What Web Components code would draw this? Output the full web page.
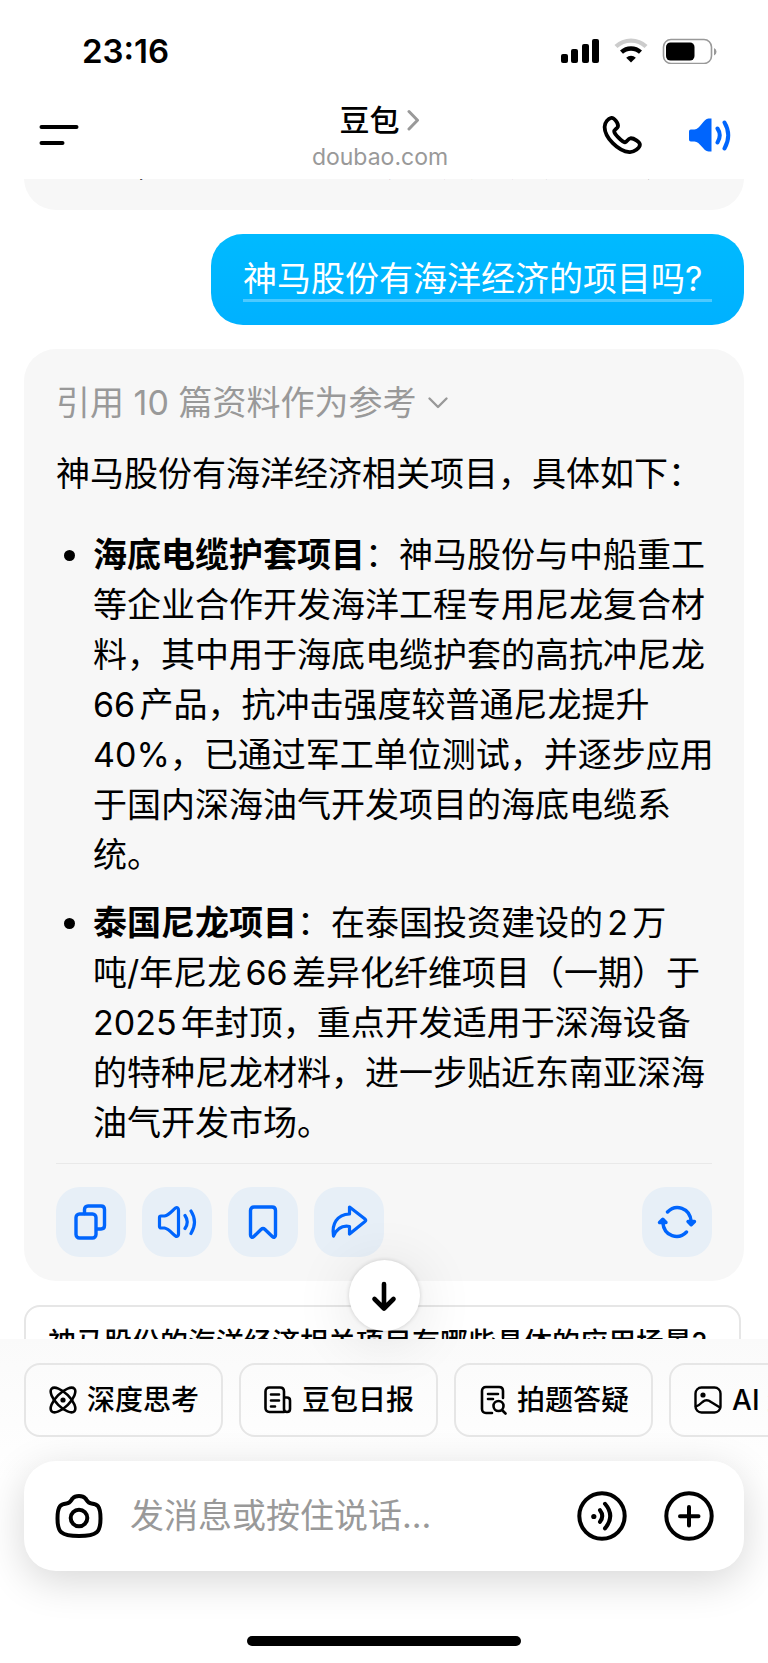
<!DOCTYPE html>
<html lang="zh-CN">
<head>
<meta charset="utf-8">
<meta name="viewport" content="width=device-width, initial-scale=1">
<title>豆包</title>
<style>
  html, body { margin: 0; height: 100%; }
  body {
    --blue: #0065fd; --card: #f7f7f7; --muted: #999; --line: #e6e6e6;
    background: #fff; color: #000;
    font: 400 34px/50px "Inter", "Noto Sans CJK SC", sans-serif;
  }
</style>
</head>
<body>
<chat-app>
  <status-bar slot="top" time="23:16"></status-bar>
  <chat-nav slot="top" name="豆包" site="doubao.com"></chat-nav>

  <answer-card previous>
    <p>66，在深海油气等领域具有应用前景广。</p>
  </answer-card>
  <user-bubble>神马股份有海洋经济的项目吗?&nbsp;</user-bubble>
  <answer-card>
    <button-link slot="source">引用 10 篇资料作为参考</button-link>
    <p>神马股份有海洋经济相关项目，具体如下：</p>
    <point-list>
      <point-item><b>海底电缆护套项目</b>：神马股份与中船重工等企业合作开发海洋工程专用尼龙复合材料，其中用于海底电缆护套的高抗冲尼龙66产品，抗冲击强度较普通尼龙提升40%，已通过军工单位测试，并逐步应用于国内深海油气开发项目的海底电缆系统。</point-item>
      <point-item><b>泰国尼龙项目</b>：在泰国投资建设的2万吨/&NoBreak;年尼龙66差异化纤维项目（一期）于2025年封顶，重点开发适用于深海设备的特种尼龙材料，进一步贴近东南亚深海油气开发市场。</point-item>
    </point-list>
    <answer-actions slot="actions"></answer-actions>
  </answer-card>
  <suggest-chip>神马股份的海洋经济相关项目有哪些具体的应用场景?</suggest-chip>

  <scroll-down slot="dock"></scroll-down>
  <tool-row slot="dock">
    <tool-chip icon="atom">深度思考</tool-chip>
    <tool-chip icon="news">豆包日报</tool-chip>
    <tool-chip icon="scan">拍题答疑</tool-chip>
    <tool-chip icon="image">AI 生图</tool-chip>
  </tool-row>
  <message-box slot="dock"></message-box>
  <home-bar slot="dock"></home-bar>
</chat-app>

<script>
const define = (name, html, setup) => {
  const tpl = document.createElement('template');
  tpl.innerHTML = html;
  customElements.define(name, class extends HTMLElement {
    constructor() {
      super();
      this.attachShadow({ mode: 'open' }).append(tpl.content.cloneNode(true));
    }
    connectedCallback() { if (setup) setup(this, this.shadowRoot); }
  });
};

const svg = (w, h, body, sw = 3) =>
  `<svg width="${w}" height="${h}" viewBox="0 0 ${w} ${h}" fill="none" stroke="currentColor" stroke-width="${sw}" stroke-linecap="round" stroke-linejoin="round" aria-hidden="true">${body}</svg>`;

const ICONS = {
  signal: svg(40, 26, '<g fill="currentColor" stroke="none"><rect x="1" y="16" width="7" height="9" rx="2"/><rect x="11" y="11" width="7" height="14" rx="2"/><rect x="22" y="6" width="7" height="19" rx="2"/><rect x="32" y="1" width="7" height="24" rx="2"/></g>'),
  wifi: svg(34, 26, '<g stroke-linecap="butt"><path d="M2 8.5a22 22 0 0 1 30 0" stroke="#ccc"/><path d="M7.500 14.200a14 14 0 0 1 19 0"/></g><path d="M17 24.500l-4.800-4.800a7 7 0 0 1 9.600 0z" fill="currentColor" stroke="none"/>', 4.4),
  battery: svg(56, 26, '<rect x="1.500" y="1.500" width="48" height="24" rx="7.500" stroke="#999" stroke-width="1.600"/><rect x="4" y="4.500" width="28.500" height="18" rx="4.500" fill="currentColor" stroke="none"/><path d="M52 10v7.500q2.500-1 2.500-3.750T52 10z" fill="#999" stroke="none"/>'),
  menu: svg(40, 24, '<path d="M2.500 4h35M2.500 20h21"/>', 4),
  chevron: svg(14, 22, '<path d="M3 2.500l8.500 8.700L3 20" stroke="#999"/>', 3),
  down: svg(22, 14, '<path d="M2.500 2.500l8.500 8.500 8.500-8.500"/>', 2.4),
  phone: svg(40, 40, '<path d="M9.300 2.900C12 2.300 16.800 8.800 15.900 11.600c-.6 2-3.900 3.200-3.700 4.800.3 2.600 7.600 10.400 10.900 10.900 1.700.3 2.600-3.700 5.200-4 3.400-.4 9.700 3.700 9.600 6.500-.1 3.300-6 7.600-10.400 7.300C16 36.200 2.700 22.500 2.600 11.900c0-4.600 3.700-8.500 6.700-9z"/>', 3.8),
  speakerSolid: svg(44, 36, '<path d="M3 12.500h3.500C12 12.500 15.500 1.500 20.500 1.500h3v33h-3C15.500 34.500 12 24.500 6.500 24.500H3c-1.700 0-2-1-2-2.500v-7c0-1.500.3-2.500 2-2.500z" fill="currentColor" stroke="none"/><path d="M29.500 11.500q4.500 6.500 0 14M36.500 5.500q7.500 12.500 0 26"/>', 4),
  copy: svg(36, 38, '<rect x="3" y="11" width="20" height="24" rx="3.500"/><path d="M11.500 10.500V6.500c0-2 1.200-3.500 3.500-3.500h13c2.300 0 3.500 1.500 3.500 3.500v16c0 2.300-1.200 3.500-3.500 3.500h-4"/>', 3.4),
  speaker: svg(40, 36, '<path d="M4 12h3.500C12.500 11 15.800 6 18.500 4c1.800-1.200 3 .2 3 2v24c0 1.800-1.200 3-3 2C15.500 30 12.500 25 7.500 24H4c-.8 0-1.500-.6-1.500-1.500v-9C2.500 12.600 3.200 12 4 12z"/><path d="M28 11.500q4.500 6.500 0 13M34 7q7 11 0 22.500"/>', 3.2),
  mark: svg(32, 36, '<path d="M7 3h18c2.200 0 3.500 1.300 3.500 3.500V31c0 2.500-1.600 3-3.200 1.500L18 25.500c-1.500-1.400-2.500-1.400-4 0l-7.200 7C5.200 34 3.500 33.500 3.500 31V6.500C3.500 4.300 4.800 3 7 3z"/>', 3.4),
  share: svg(40, 36, '<path d="M20.500 3l15.500 12c1 .8 1 1.700 0 2.500L20.500 30v-7.500C12 21 7.500 25.500 4.500 32 2.500 20 8 10.500 20.500 10z"/>', 3.2),
  refresh: svg(40, 36, '<path d="M10.500 8C18.500-.5 33 3.500 34.200 17.500M29.500 28C21.500 36.500 7 32.500 5.800 18.500"/><path d="M31 17.500h6.500l-3.300 3.300zM2.500 18.500H9l-3.200-3.300z"/>', 3.4),
  arrow: svg(28, 32, '<path d="M14 4v24M4.500 19l9.500 9.500 9.500-9.500"/>', 4.6),
  atom: svg(30, 30, '<g transform="translate(15 15)"><ellipse rx="16" ry="6.800" transform="rotate(45)"/><ellipse rx="16" ry="6.800" transform="rotate(-45)"/><circle r="2.600" fill="currentColor" stroke="none"/></g>', 2.6),
  news: svg(30, 30, '<path d="M21 27H6.500c-2.500 0-4-1.500-4-4V6.500c0-2.500 1.500-4 4-4H17c2.500 0 4 1.500 4 4V24c0 2 1 3 3 3s3-1 3-3v-8.500c0-2-1-3-3-3h-2.500M8 9.500h8M8 15.500h8M8 21.500h4"/>', 2.6),
  scan: svg(30, 30, '<path d="M14 28H8c-2.500 0-4-1.500-4-4V6c0-2.500 1.500-4 4-4h13c2.500 0 4 1.500 4 4v7M10 9h10M10 14h5M24.500 25.500l3 3"/><circle cx="20.500" cy="21" r="5"/>', 2.6),
  image: svg(30, 30, '<rect x="2.500" y="2.500" width="25" height="25" rx="6"/><path d="M3 21.500q3.500-1.500 6.500-4.500 4-3.500 8.500 0l9 5.500"/><circle cx="10" cy="10" r="2.600" fill="currentColor" stroke="none"/>', 2.4),
  camera: svg(50, 48, '<path d="M18.500 6.500c1.500-1.700 3-2.500 6.500-2.500s5 .8 6.500 2.500c2 2.800 2.500 4.500 6 5C43 12.300 46.500 13 46.500 26.500 46.500 40 43.500 44 25 44S3.500 40 3.500 26.500C3.500 13 7 12.300 12.500 11.500c3.500-.5 4-2.200 6-5z"/><circle cx="25" cy="26" r="8.300"/>', 4),
  voice: svg(50, 50, '<circle cx="25" cy="25" r="22.700"/><path d="M23 19.200q4.500 5.800 0 11.600M28 12.800q10.500 12.200 0 24.600"/><circle cx="16.800" cy="25.500" r="2.600" fill="currentColor" stroke="none"/>', 4),
  plus: svg(50, 50, '<circle cx="25" cy="25" r="22.700"/><path d="M25 16v18.500M16 25.200h18.500"/>', 4)
};

const BTN = 'button{appearance:none;border:0;margin:0;padding:0;background:none;color:inherit;font:inherit;cursor:pointer}svg{display:block}';

define('ui-icon', '<style>:host{display:block;flex:none;line-height:0}svg{display:block}</style><span></span>',
  (el, root) => { root.querySelector('span').innerHTML = ICONS[el.getAttribute('name')] || ''; });

define('chat-app', `<style>
  :host{display:flex;flex-direction:column;height:100vh;min-height:900px;overflow:hidden}
  header{flex:none;background:#fff;position:relative}
  main{flex:1;min-height:0;overflow:hidden;display:flex;flex-direction:column;gap:24px;padding:0 24px}
  footer{flex:none;position:relative;background:linear-gradient(#fafafa,#fff 140px)}
</style><header><slot name="top"></slot></header><main><slot></slot></main><footer><slot name="dock"></slot></footer>`);

define('status-bar', `<style>
  :host{display:flex;align-items:center;justify-content:space-between;padding:26px 50px 0 82px;font-weight:600;font-size:33px}
  div{display:flex;align-items:center;gap:14px}
</style><time></time><div><ui-icon name="signal"></ui-icon><ui-icon name="wifi"></ui-icon><ui-icon name="battery"></ui-icon></div>`,
  (el, root) => { root.querySelector('time').textContent = el.getAttribute('time'); });

define('chat-nav', `<style>${BTN}
  :host{display:grid;grid-template-columns:1fr auto 1fr;align-items:center;padding:22px 36px 7px 28px}
  .left{padding-left:11px}
  .who{display:flex;flex-direction:column;align-items:center}
  .name{display:flex;align-items:center;gap:7px;font-size:30px;line-height:44px;font-weight:500}
  .site{font-size:23px;line-height:30px;color:var(--muted)}
  .right{display:flex;justify-content:flex-end;align-items:center;gap:46px}
  .blue{color:var(--blue)}
</style>
<div class="left"><button aria-label="菜单"><ui-icon name="menu"></ui-icon></button></div>
<button class="who"><span class="name"><span id="n"></span><ui-icon name="chevron"></ui-icon></span><span class="site"></span></button>
<div class="right"><button aria-label="通话"><ui-icon name="phone"></ui-icon></button><button class="blue" aria-label="朗读"><ui-icon name="speakerSolid"></ui-icon></button></div>`,
  (el, root) => {
    root.querySelector('#n').textContent = el.getAttribute('name');
    root.querySelector('.site').textContent = el.getAttribute('site');
  });

define('user-bubble', `<style>
  :host{display:block;flex:none;align-self:flex-end;padding:25px 32px 23px;border-radius:32px;color:#fff;background:linear-gradient(#00baff,#00b1ff)}
  span{display:block;line-height:40px;border-bottom:3px solid #4cc9ff}
</style><span><slot></slot></span>`);

define('answer-card', `<style>
  :host{display:block;flex:none;background:var(--card);border-radius:32px;padding:29px 32px 24px}
  :host([previous]){margin-top:-50px;padding:10px 0 21px 69px}
  ::slotted(p){margin:0}
  ::slotted(button-link){margin-bottom:21px}
</style><slot name="source"></slot><slot></slot><slot name="actions"></slot>`);

define('button-link', `<style>${BTN}
  :host{display:block;color:var(--muted)}
  button{display:flex;align-items:center;gap:11px}
</style><button><span><slot></slot></span><ui-icon name="down"></ui-icon></button>`);

define('point-list', '<style>:host{display:flex;flex-direction:column;gap:18px;margin:31px -6px 0 0;text-autospace:normal}</style><slot></slot>',
  el => el.setAttribute('role', 'list'));

define('point-item', `<style>
  :host{display:grid;grid-template-columns:37px 1fr}
  i{width:11px;height:11px;border-radius:50%;background:currentColor;margin:20px 0 0 8px}
  ::slotted(b){font-weight:600}
</style><i></i><div><slot></slot></div>`, el => el.setAttribute('role', 'listitem'));

define('answer-actions', `<style>${BTN}
  :host{display:flex;gap:16px;margin-top:15px;padding-top:23px;border-top:1px solid #e9e9e9}
  button{width:70px;height:70px;border-radius:24px;background:#e7eff7;color:var(--blue);display:grid;place-items:center}
  .last{margin-left:auto}
</style>
<button aria-label="复制"><ui-icon name="copy"></ui-icon></button>
<button aria-label="播放"><ui-icon name="speaker"></ui-icon></button>
<button aria-label="收藏"><ui-icon name="mark"></ui-icon></button>
<button aria-label="分享"><ui-icon name="share"></ui-icon></button>
<button class="last" aria-label="重新生成"><ui-icon name="refresh"></ui-icon></button>`);

define('suggest-chip', `<style>${BTN}
  :host{display:block;flex:none;align-self:flex-start}
  button{border:2px solid var(--line);border-radius:16px;padding:16px 32px 16px 22px;font-size:28px;line-height:40px;font-weight:500;background:#fff;white-space:nowrap}
</style><button><slot></slot></button>`);

define('scroll-down', `<style>${BTN}
  :host{position:absolute;left:0;right:0;bottom:100%;display:flex;justify-content:center;padding-bottom:8px;pointer-events:none}
  button{width:71px;height:71px;border-radius:50%;background:#fff;display:grid;place-items:center;box-shadow:0 0 4px rgba(0,0,0,.16),0 8px 60px rgba(0,0,0,.12);pointer-events:auto}
</style><button aria-label="滚动到底部"><ui-icon name="arrow"></ui-icon></button>`);

define('tool-row', '<style>:host{display:flex;gap:16px;overflow:hidden;padding:24px 0 24px 24px}</style><slot></slot>');

define('tool-chip', `<style>${BTN}
  :host{display:block;flex:none}
  button{display:flex;align-items:center;gap:9px;border:2px solid var(--line);border-radius:16px;padding:15px 22px;font-size:28px;line-height:40px;font-weight:500;white-space:nowrap}
</style><button><span><slot></slot></span></button>`,
  (el, root) => {
    if (root.querySelector('ui-icon')) return;
    const icon = document.createElement('ui-icon');
    icon.setAttribute('name', el.getAttribute('icon'));
    root.querySelector('button').prepend(icon);
  });

define('message-box', `<style>${BTN}
  :host{display:flex;align-items:center;margin:0 24px;padding:30px;border-radius:32px;background:#fff;box-shadow:0 10px 40px rgba(0,0,0,.16)}
  input{flex:1;min-width:0;height:50px;border:0;outline:0;padding:0;margin:0 24px 0 26px;background:none;font:inherit;color:#000}
  input::placeholder{color:var(--muted);opacity:1}
  .end{margin-left:37px}
</style>
<button aria-label="拍照"><ui-icon name="camera"></ui-icon></button>
<input type="text" aria-label="消息" placeholder="发消息或按住说话...">
<button aria-label="语音"><ui-icon name="voice"></ui-icon></button>
<button class="end" aria-label="更多"><ui-icon name="plus"></ui-icon></button>`);

define('home-bar', '<style>:host{display:flex;justify-content:center;padding:65px 0 17px}i{width:274px;height:10px;border-radius:5px;background:#000}</style><i></i>');
</script>
</body>
</html>
